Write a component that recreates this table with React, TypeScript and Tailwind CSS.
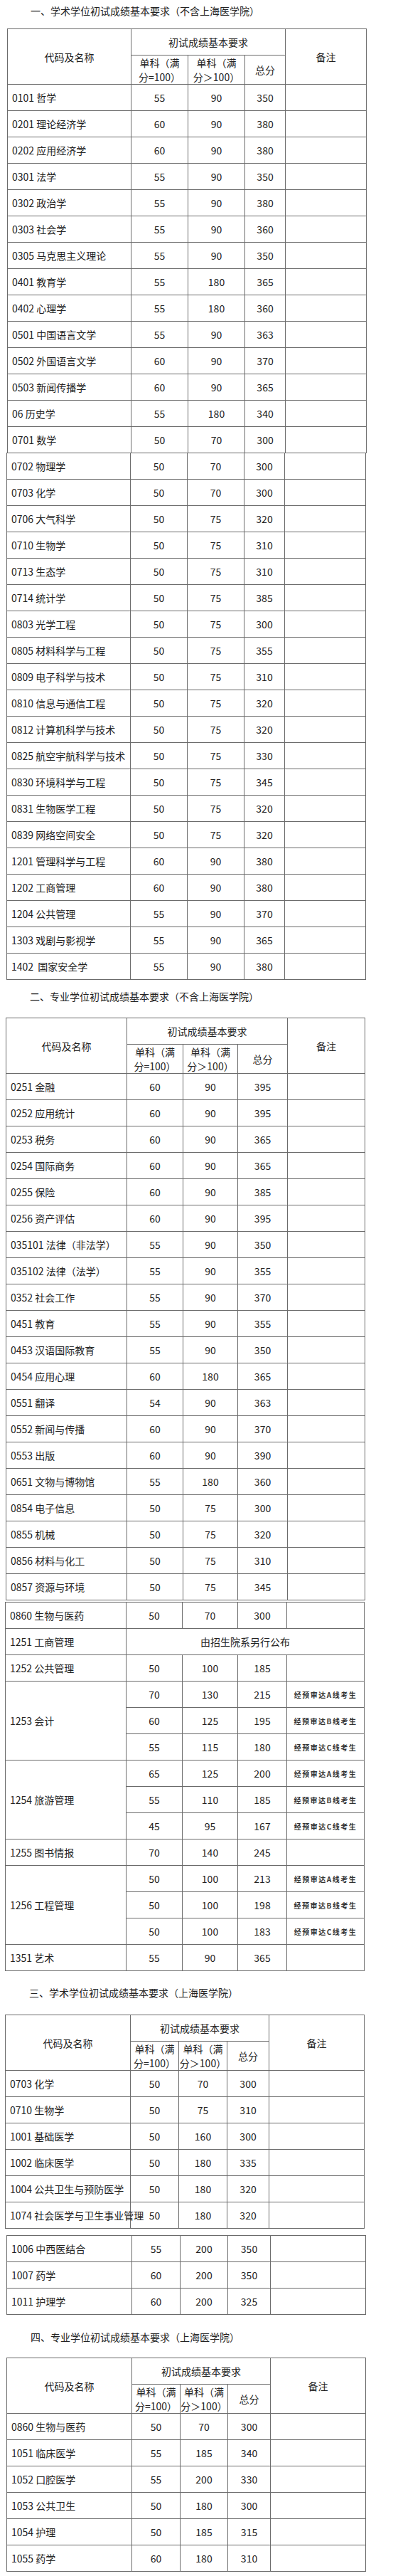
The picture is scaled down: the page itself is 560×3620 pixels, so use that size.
import React from 'react';

type Line = [string, string, string, string];
type Sub = { a: string; b: string; t: string; note?: string };
type Row =
  | { kind: 'line'; v: Line }
  | { kind: 'group'; name: string; subs: Sub[] }
  | { kind: 'merged'; name: string; text: string };

const cell = 'border border-[#6b6b6b]';

const line = (v: Line): Row => ({ kind: 'line', v });

const t1a: Row[] = [
  ['0101 哲学', '55', '90', '350'],
  ['0201 理论经济学', '60', '90', '380'],
  ['0202 应用经济学', '60', '90', '380'],
  ['0301 法学', '55', '90', '350'],
  ['0302 政治学', '55', '90', '380'],
  ['0303 社会学', '55', '90', '360'],
  ['0305 马克思主义理论', '55', '90', '350'],
  ['0401 教育学', '55', '180', '365'],
  ['0402 心理学', '55', '180', '360'],
  ['0501 中国语言文学', '55', '90', '363'],
  ['0502 外国语言文学', '60', '90', '370'],
  ['0503 新闻传播学', '60', '90', '365'],
  ['06 历史学', '55', '180', '340'],
  ['0701 数学', '50', '70', '300'],
].map((v) => line(v as Line));

const t1b: Row[] = [
  ['0702 物理学', '50', '70', '300'],
  ['0703 化学', '50', '70', '300'],
  ['0706 大气科学', '50', '75', '320'],
  ['0710 生物学', '50', '75', '310'],
  ['0713 生态学', '50', '75', '310'],
  ['0714 统计学', '50', '75', '385'],
  ['0803 光学工程', '50', '75', '300'],
  ['0805 材料科学与工程', '50', '75', '355'],
  ['0809 电子科学与技术', '50', '75', '310'],
  ['0810 信息与通信工程', '50', '75', '320'],
  ['0812 计算机科学与技术', '50', '75', '320'],
  ['0825 航空宇航科学与技术', '50', '75', '330'],
  ['0830 环境科学与工程', '50', '75', '345'],
  ['0831 生物医学工程', '50', '75', '320'],
  ['0839 网络空间安全', '50', '75', '320'],
  ['1201 管理科学与工程', '60', '90', '380'],
  ['1202 工商管理', '60', '90', '380'],
  ['1204 公共管理', '55', '90', '370'],
  ['1303 戏剧与影视学', '55', '90', '365'],
  ['1402\u00a0 国家安全学', '55', '90', '380'],
].map((v) => line(v as Line));

const t2a: Row[] = [
  ['0251 金融', '60', '90', '395'],
  ['0252 应用统计', '60', '90', '395'],
  ['0253 税务', '60', '90', '365'],
  ['0254 国际商务', '60', '90', '365'],
  ['0255 保险', '60', '90', '385'],
  ['0256 资产评估', '60', '90', '395'],
  ['035101 法律（非法学）', '55', '90', '350'],
  ['035102 法律（法学）', '55', '90', '355'],
  ['0352 社会工作', '55', '90', '370'],
  ['0451 教育', '55', '90', '355'],
  ['0453 汉语国际教育', '55', '90', '350'],
  ['0454 应用心理', '60', '180', '365'],
  ['0551 翻译', '54', '90', '363'],
  ['0552 新闻与传播', '60', '90', '370'],
  ['0553 出版', '60', '90', '390'],
  ['0651 文物与博物馆', '55', '180', '360'],
  ['0854 电子信息', '50', '75', '300'],
  ['0855 机械', '50', '75', '320'],
  ['0856 材料与化工', '50', '75', '310'],
  ['0857 资源与环境', '50', '75', '345'],
].map((v) => line(v as Line));

const t2b: Row[] = [
  line(['0860 生物与医药', '50', '70', '300']),
  { kind: 'merged', name: '1251 工商管理', text: '由招生院系另行公布' },
  line(['1252 公共管理', '50', '100', '185']),
  {
    kind: 'group',
    name: '1253 会计',
    subs: [
      { a: '70', b: '130', t: '215', note: '经预审达A线考生' },
      { a: '60', b: '125', t: '195', note: '经预审达B线考生' },
      { a: '55', b: '115', t: '180', note: '经预审达C线考生' },
    ],
  },
  {
    kind: 'group',
    name: '1254 旅游管理',
    subs: [
      { a: '65', b: '125', t: '200', note: '经预审达A线考生' },
      { a: '55', b: '110', t: '185', note: '经预审达B线考生' },
      { a: '45', b: '95', t: '167', note: '经预审达C线考生' },
    ],
  },
  line(['1255 图书情报', '70', '140', '245']),
  {
    kind: 'group',
    name: '1256 工程管理',
    subs: [
      { a: '50', b: '100', t: '213', note: '经预审达A线考生' },
      { a: '50', b: '100', t: '198', note: '经预审达B线考生' },
      { a: '50', b: '100', t: '183', note: '经预审达C线考生' },
    ],
  },
  line(['1351 艺术', '55', '90', '365']),
];

const t3a: Row[] = [
  ['0703 化学', '50', '70', '300'],
  ['0710 生物学', '50', '75', '310'],
  ['1001 基础医学', '50', '160', '300'],
  ['1002 临床医学', '50', '180', '335'],
  ['1004 公共卫生与预防医学', '50', '180', '320'],
  ['1074 社会医学与卫生事业管理', '50', '180', '320'],
].map((v) => line(v as Line));

const t3b: Row[] = [
  ['1006 中西医结合', '55', '200', '350'],
  ['1007 药学', '60', '200', '350'],
  ['1011 护理学', '60', '200', '325'],
].map((v) => line(v as Line));

const t4: Row[] = [
  ['0860 生物与医药', '50', '70', '300'],
  ['1051 临床医学', '55', '185', '340'],
  ['1052 口腔医学', '55', '200', '330'],
  ['1053 公共卫生', '50', '180', '300'],
  ['1054 护理', '50', '185', '315'],
  ['1055 药学', '60', '180', '310'],
].map((v) => line(v as Line));

function Note({ text }: { text?: string }) {
  if (!text) return null;
  return <span className="text-[10px] tracking-[1.5px] font-bold text-[#333]">{text}</span>;
}

function Head() {
  return (
    <thead>
      <tr className="h-[37px]">
        <td rowSpan={2} className={`${cell} text-center`}>
          代码及名称
        </td>
        <td colSpan={3} className={`${cell} text-center`}>
          初试成绩基本要求
        </td>
        <td rowSpan={2} className={`${cell} text-center`}>
          备注
        </td>
      </tr>
      <tr className="h-[41px]">
        <td className={`${cell} text-center leading-5`}>
          单科（满
          <br />
          分=100）
        </td>
        <td className={`${cell} text-center leading-5`}>
          单科（满
          <br />
          分＞100）
        </td>
        <td className={`${cell} text-center`}>总分</td>
      </tr>
    </thead>
  );
}

function Body({ rows }: { rows: Row[] }) {
  return (
    <tbody>
      {rows.map((r, i) => {
        if (r.kind === 'line') {
          const [name, a, b, t] = r.v;
          return (
            <tr key={i} className="h-[37px]">
              <td className={`${cell} pl-[6px] whitespace-nowrap`}>{name}</td>
              <td className={`${cell} text-center`}>{a}</td>
              <td className={`${cell} text-center`}>{b}</td>
              <td className={`${cell} text-center`}>{t}</td>
              <td className={cell}></td>
            </tr>
          );
        }
        if (r.kind === 'merged') {
          return (
            <tr key={i} className="h-[37px]">
              <td className={`${cell} pl-[6px] whitespace-nowrap`}>{r.name}</td>
              <td colSpan={4} className={`${cell} text-center`}>
                {r.text}
              </td>
            </tr>
          );
        }
        return r.subs.map((s, j) => (
          <tr key={`${i}-${j}`} className="h-[37px]">
            {j === 0 && (
              <td rowSpan={r.subs.length} className={`${cell} pl-[6px] whitespace-nowrap`}>
                {r.name}
              </td>
            )}
            <td className={`${cell} text-center`}>{s.a}</td>
            <td className={`${cell} text-center`}>{s.b}</td>
            <td className={`${cell} text-center`}>{s.t}</td>
            <td className={`${cell} text-center`}>
              <Note text={s.note} />
            </td>
          </tr>
        ));
      })}
    </tbody>
  );
}

function Table({
  cols,
  className,
  header = false,
  rows,
}: {
  cols: string[];
  className: string;
  header?: boolean;
  rows: Row[];
}) {
  return (
    <table className={`table-fixed border-collapse w-[505px] ${className}`}>
      <colgroup>
        {cols.map((c, i) => (
          <col key={i} className={c} />
        ))}
      </colgroup>
      {header && <Head />}
      <Body rows={rows} />
    </table>
  );
}

const cols1 = ['w-[174px]', 'w-[80px]', 'w-[80px]', 'w-[57px]', 'w-[114px]'];
const cols2a = ['w-[170px]', 'w-[79px]', 'w-[77px]', 'w-[70px]', 'w-[109px]'];
const cols2b = ['w-[170px]', 'w-[79px]', 'w-[78px]', 'w-[69px]', 'w-[109px]'];
const cols3a = ['w-[176px]', 'w-[68px]', 'w-[68px]', 'w-[59px]', 'w-[134px]'];
const cols3b = ['w-[176px]', 'w-[68px]', 'w-[67px]', 'w-[60px]', 'w-[134px]'];

export default function App() {
  return (
    <div className="w-[560px] bg-white text-[14px] leading-5 text-[#222] font-['Noto_Sans_CJK_SC',sans-serif] pb-[10px]">
      <p className="ml-[43px] pt-[5px] mb-[20px] h-5">一、学术学位初试成绩基本要求（不含上海医学院）</p>
      <Table cols={cols1} className="ml-[10px]" header rows={t1a} />
      <Table cols={cols1} className="ml-[9px] -mt-px" rows={t1b} />

      <p className="ml-[42px] mt-[13px] mb-[20px] h-5">二、专业学位初试成绩基本要求（不含上海医学院）</p>
      <Table cols={cols2a} className="ml-[8px]" header rows={t2a} />
      <Table cols={cols2b} className="ml-[7px] mt-[2px]" rows={t2b} />

      <p className="ml-[41px] mt-[20px] mb-[21px] h-5">三、学术学位初试成绩基本要求（上海医学院）</p>
      <Table cols={cols3a} className="ml-[7px]" header rows={t3a} />
      <Table cols={cols3b} className="ml-[9px] mt-[9px]" rows={t3b} />

      <p className="ml-[43px] mt-[21px] mb-[19px] h-5">四、专业学位初试成绩基本要求（上海医学院）</p>
      <Table cols={cols3b} className="ml-[9px]" header rows={t4} />
    </div>
  );
}
